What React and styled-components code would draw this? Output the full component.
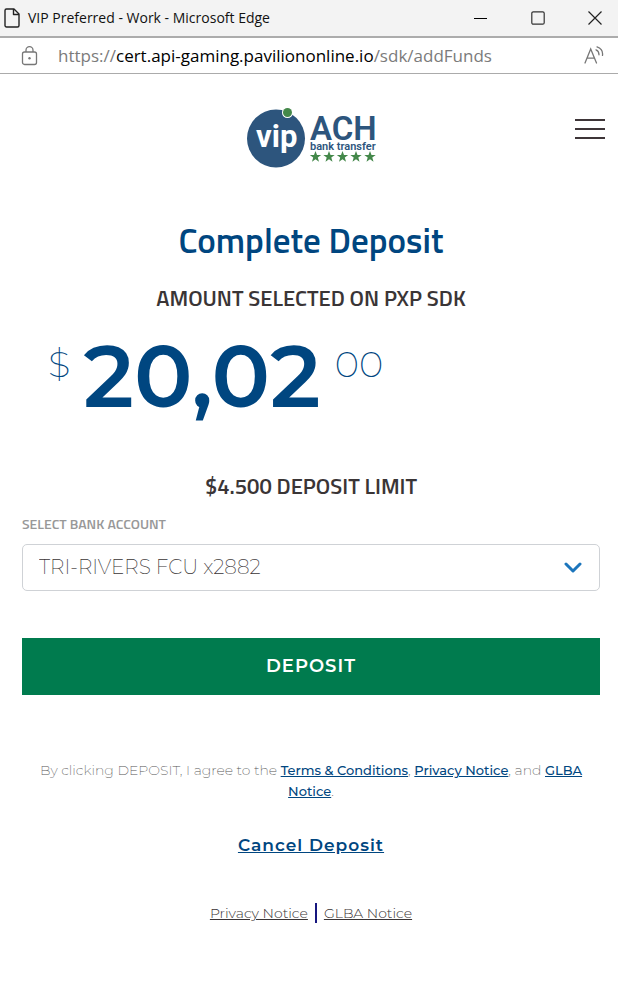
import React from "react";
import styled, { createGlobalStyle } from "styled-components";

const navy = "#004680";
const ink = "#3a3536";
const condensed = '"Titillium Web", Roboto, sans-serif';
const body = 'Montserrat, Inter, sans-serif';
const system = '"Segoe UI", "Open Sans", sans-serif';

const GlobalStyle = createGlobalStyle`
  *, *::before, *::after { box-sizing: border-box; }
  body { margin: 0; background: #fff; color: ${ink}; font-family: ${body}; }
  h1, h2, p { margin: 0; }
  button { border: 0; padding: 0; background: none; font: inherit; color: inherit; cursor: pointer; }
  svg { display: block; }
`;

const TitleBar = styled.header`
  display: flex;
  align-items: center;
  gap: 11px;
  height: 38px;
  padding-left: 4px;
  background: #f3f3f3;
  border-bottom: 2px solid #acacac;
  font: 400 14px/20px ${system};
  color: #111;
`;

const WindowTitle = styled.span`
  flex: 1;
  margin-left: -3px;
`;

const WindowButton = styled.button`
  display: grid;
  place-items: center;
  width: 46px;
  height: 36px;
`;

const AddressBar = styled.div`
  display: flex;
  align-items: center;
  height: 36px;
  padding: 0 14px 0 20px;
  border-bottom: 1px solid #ababab;
  font: 400 17px/24px ${system};
  color: #7b7b7b;
`;

const Url = styled.span`
  flex: 1;
  margin-left: 20px;

  b { font-weight: 400; color: #000; }
`;

const SiteHeader = styled.div`
  display: grid;
  grid-template-columns: 1fr auto 1fr;
  align-items: start;
  padding: 32px 13px 0 20px;
`;

const LogoLink = styled.a`
  grid-column: 2;
`;

const MenuButton = styled.button`
  grid-column: 3;
  justify-self: end;
  padding-top: 13px;
`;

const Content = styled.main`
  display: flex;
  flex-direction: column;
  padding: 0 18px 48px 22px;
  text-align: center;
`;

const Title = styled.h1`
  margin-top: 50px;
  font: 600 35px/44px ${condensed};
  color: ${navy};
`;

const Subtitle = styled.h2`
  margin-top: ${(p) => p.$space}px;
  font: 600 22px/32px ${condensed};
`;

const Amount = styled.p`
  display: flex;
  align-items: flex-start;
  margin: 10px 0 0 26px;
  color: ${navy};
`;

const AmountWhole = styled.strong`
  margin: 0 14px 0 13px;
  font-size: 87px;
  font-weight: 600;
  line-height: 104px;
`;

const AmountSmall = styled.span`
  padding-top: 18px;
  font-size: 37px;
  font-weight: 200;
  line-height: 44px;
`;

const Label = styled.label`
  margin-top: 12px;
  font: 600 14px/20px ${condensed};
  color: #989898;
  text-align: left;
`;

const SelectWrap = styled.div`
  position: relative;
  margin-top: 10px;

  svg {
    position: absolute;
    top: 18px;
    right: 17px;
    pointer-events: none;
  }
`;

const Select = styled.select`
  appearance: none;
  display: block;
  width: 100%;
  height: 47px;
  padding: 0 48px 2px 16px;
  border: 1px solid #cfd2d6;
  border-radius: 5px;
  background: #fff;
  color: ${ink};
  font: 200 20px/28px ${body};
`;

const DepositButton = styled.button`
  height: 57px;
  margin-top: 47px;
  padding-bottom: 2px;
  background: #007b4e;
  color: #fff;
  font-size: 18px;
  font-weight: 600;
  letter-spacing: 1px;
`;

const Terms = styled.p`
  margin-top: 65px;
  padding: 0 16px;
  font-size: 14px;
  font-weight: 200;
  line-height: 21px;
  color: #555;
`;

const TermsLink = styled.a`
  color: ${navy};
  font-size: 13px;
  font-weight: 500;
`;

const CancelLink = styled.a`
  align-self: center;
  margin-top: 31px;
  color: ${navy};
  font-size: 17px;
  font-weight: 600;
  line-height: 24px;
  letter-spacing: 1px;
`;

const FooterLinks = styled.nav`
  display: flex;
  justify-content: center;
  align-items: center;
  margin-top: 46px;
  font-size: 14px;
  font-weight: 300;
  line-height: 21px;

  a { color: ${ink}; }
  a + a {
    position: relative;
    margin-left: 16px;
  }
  a + a::before {
    content: "";
    position: absolute;
    top: 0;
    left: -9px;
    width: 2px;
    height: 20px;
    background: #17177f;
  }
`;

function Logo() {
  const star = "M0-6 1.5-2H5.700L2.300.6 3.500 4.700 0 2.200-3.500 4.700-2.300.6-5.700-2H-1.500Z";
  return (
    <svg width="131" height="62" viewBox="0 0 131 62" role="img" aria-label="VIP ACH bank transfer">
      <circle cx="29" cy="32.500" r="29" fill="#2d557d" />
      <circle cx="40.500" cy="6.500" r="5.500" fill="#fff" />
      <circle cx="40.500" cy="6.500" r="4.500" fill="#44884a" />
      <text x="9" y="41" fontFamily="Roboto, sans-serif" fontWeight="700" fontSize="31" fill="#fff">vip</text>
      <text x="63" y="34" fontFamily="Roboto, sans-serif" fontWeight="600" fontSize="33" fill="#2d557d">ACH</text>
      <text x="63" y="43.500" fontFamily="Roboto, sans-serif" fontWeight="600" fontSize="11" fill="#2d557d">bank transfer</text>
      {[68.5, 82, 95.5, 109, 123].map((x) => (
        <path key={x} d={star} transform={`translate(${x} 51)`} fill="#44884a" />
      ))}
    </svg>
  );
}

export default function App() {
  return (
    <>
      <GlobalStyle />
      <TitleBar>
        <svg width="16" height="20" viewBox="0 0 16 20" fill="none" stroke="#222" strokeWidth="1.400" strokeLinejoin="round">
          <path d="M2.500 1H10l5 5v11.500a1.500 1.500 0 0 1-1.500 1.500h-11A1.500 1.500 0 0 1 1 17.500v-15A1.500 1.500 0 0 1 2.500 1Z" />
          <path d="M9.500 1v5.500H15" />
        </svg>
        <WindowTitle>VIP Preferred - Work - Microsoft Edge</WindowTitle>
        <WindowButton aria-label="Minimize">
          <svg width="14" height="14" stroke="#000"><path d="M0 7.500h13" /></svg>
        </WindowButton>
        <WindowButton aria-label="Maximize">
          <svg width="14" height="14" fill="none" stroke="#333" strokeWidth="1.200"><rect x=".8" y=".8" width="12.400" height="12.400" rx="1.500" /></svg>
        </WindowButton>
        <WindowButton aria-label="Close">
          <svg width="14" height="14" stroke="#222" strokeWidth="1.200"><path d="m.5.5 13 13m0-13-13 13" /></svg>
        </WindowButton>
      </TitleBar>
      <AddressBar>
        <svg width="18" height="20" viewBox="0 0 18 20" fill="none" stroke="#777" strokeWidth="1.300">
          <rect x="2.500" y="6" width="14" height="12.500" rx="2" />
          <path d="M6 6V4.200a3.500 3.500 0 0 1 7 0V6" />
          <circle cx="9.500" cy="12.200" r="1.200" fill="#777" stroke="none" />
        </svg>
        <Url>https://<b>cert.api-gaming.paviliononline.io</b>/sdk/addFunds</Url>
        <button aria-label="Read aloud">
          <svg width="20" height="20" viewBox="0 0 20 20" fill="none" stroke="#777" strokeWidth="1.300" strokeLinecap="round">
            <path d="M1 17 6.700 3 12.500 17M3 12.200h7.500" />
            <path d="M12 3.800c2 .8 3 2.500 3 5M13 .9c4 1.300 6 4.500 5.500 8.500" />
          </svg>
        </button>
      </AddressBar>
      <SiteHeader>
        <LogoLink href="#"><Logo /></LogoLink>
        <MenuButton aria-label="Menu">
          <svg width="30" height="20" fill="#3e3538">
            <rect width="30" height="2" />
            <rect y="9" width="30" height="2" />
            <rect y="18" width="30" height="2" />
          </svg>
        </MenuButton>
      </SiteHeader>
      <Content>
        <Title>Complete Deposit</Title>
        <Subtitle $space={20}>AMOUNT SELECTED ON PXP SDK</Subtitle>
        <Amount>
          <AmountSmall>$</AmountSmall>
          <AmountWhole>20,02</AmountWhole>
          <AmountSmall>00</AmountSmall>
        </Amount>
        <Subtitle $space={42}>$4.500 DEPOSIT LIMIT</Subtitle>
        <Label htmlFor="bank-account">SELECT BANK ACCOUNT</Label>
        <SelectWrap>
          <Select id="bank-account">
            <option>TRI-RIVERS FCU x2882</option>
          </Select>
          <svg width="20" height="13" fill="none" stroke="#1b75bc" strokeWidth="3" strokeLinecap="round" strokeLinejoin="round">
            <path d="m3 2 7 7 7-7" />
          </svg>
        </SelectWrap>
        <DepositButton>DEPOSIT</DepositButton>
        <Terms>
          By clicking DEPOSIT, I agree to the <TermsLink href="#">Terms &amp; Conditions</TermsLink>,{" "}
          <TermsLink href="#">Privacy Notice</TermsLink>, and <TermsLink href="#">GLBA Notice</TermsLink>.
        </Terms>
        <CancelLink href="#">Cancel Deposit</CancelLink>
        <FooterLinks>
          <a href="#">Privacy Notice</a>
          <a href="#">GLBA Notice</a>
        </FooterLinks>
      </Content>
    </>
  );
}
